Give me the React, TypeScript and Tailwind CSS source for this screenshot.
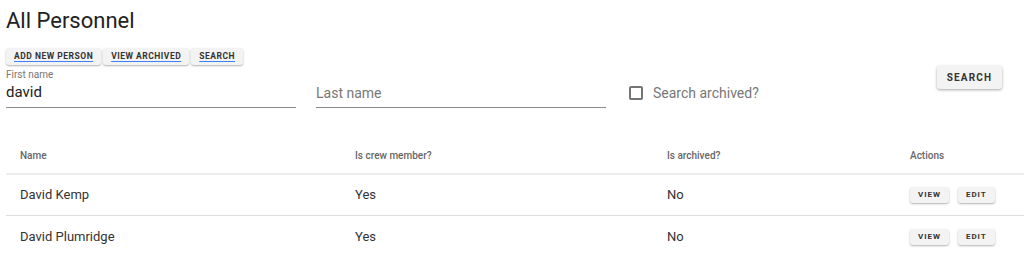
const rows = [
  { name: "David Kemp", crew: "Yes", archived: "No" },
  { name: "David Plumridge", crew: "Yes", archived: "No" },
];

function SmallButton({ label }: { label: string }) {
  return (
    <button className="h-[16px] rounded-[3px] bg-[#f3f3f3] px-[8px] text-[8px] font-bold leading-none tracking-[0.12em] text-[#333] shadow-[0_1px_2px_rgba(0,0,0,0.3)]">
      {label}
    </button>
  );
}

function LinkButton({ label }: { label: string }) {
  return (
    <button className="h-[17px] rounded-[3px] bg-[#f3f3f3] px-[8px] text-[8.5px] font-bold leading-none tracking-[0.06em] text-[#333] underline decoration-[#3b82f6] underline-offset-2 shadow-[0_1px_2px_rgba(0,0,0,0.3)]">
      {label}
    </button>
  );
}

export default function App() {
  return (
    <div className="h-[274px] w-[1024px] overflow-hidden bg-white font-['Roboto',sans-serif] text-[#222]">
      {/* Header */}
      <h1 className="pl-[6px] pt-[7px] text-[22px] font-normal leading-[28px] text-[#222]">
        All Personnel
      </h1>

      <div className="ml-[6px] mt-[13px] flex gap-[2px]">
        <LinkButton label="ADD NEW PERSON" />
        <LinkButton label="VIEW ARCHIVED" />
        <LinkButton label="SEARCH" />
      </div>

      {/* Search form */}
      <div className="ml-[6px] flex items-start">
        <div className="w-[290px] border-b border-[#8a8a8a]">
          <div className="mt-[4px] text-[10px] leading-[12px] text-[#777]">First name</div>
          <div className="pb-[6px] pt-[2px] text-[15px] leading-[18px] text-[#222]">david</div>
        </div>
        <div className="ml-[20px] w-[290px] border-b border-[#8a8a8a]">
          <div className="pb-[5px] pt-[19px] text-[14px] leading-[18px] text-[#777]">Last name</div>
        </div>
        <div className="ml-[23px] mt-[19px] flex items-center gap-[10px]">
          <div className="h-[14px] w-[14px] rounded-[2px] border-2 border-[#757575]" />
          <span className="text-[14px] leading-[18px] text-[#777]">Search archived?</span>
        </div>
        <button className="ml-auto mr-[22px] mt-[1px] h-[23px] w-[65px] rounded-[3px] bg-[#f3f3f3] text-[10px] font-bold tracking-[0.12em] text-[#333] shadow-[0_1px_3px_rgba(0,0,0,0.35)]">
          SEARCH
        </button>
      </div>

      {/* Table */}
      <div className="ml-[6px] mt-[29px]">
        <div className="grid h-[38px] grid-cols-[335px_312px_243px_1fr] items-center border-b-2 border-[#ececec] text-[10px] font-medium text-[#666]">
          <div className="pl-[14px]">Name</div>
          <div className="pl-[14px]">Is crew member?</div>
          <div className="pl-[14px]">Is archived?</div>
          <div className="pl-[14px]">Actions</div>
        </div>
        {rows.map((row, index) => (
          <div
            key={row.name}
            className={`grid h-[41px] grid-cols-[335px_312px_243px_1fr] items-center text-[13px] text-[#333] ${
              index !== rows.length - 1 ? "border-b border-[#e0e0e0]" : ""
            }`}
          >
            <div className="pl-[14px]">{row.name}</div>
            <div className="pl-[14px]">{row.crew}</div>
            <div className="pl-[14px]">{row.archived}</div>
            <div className="flex gap-[9px] pl-[14px]">
              <SmallButton label="VIEW" />
              <SmallButton label="EDIT" />
            </div>
          </div>
        ))}
      </div>
    </div>
  );
}
